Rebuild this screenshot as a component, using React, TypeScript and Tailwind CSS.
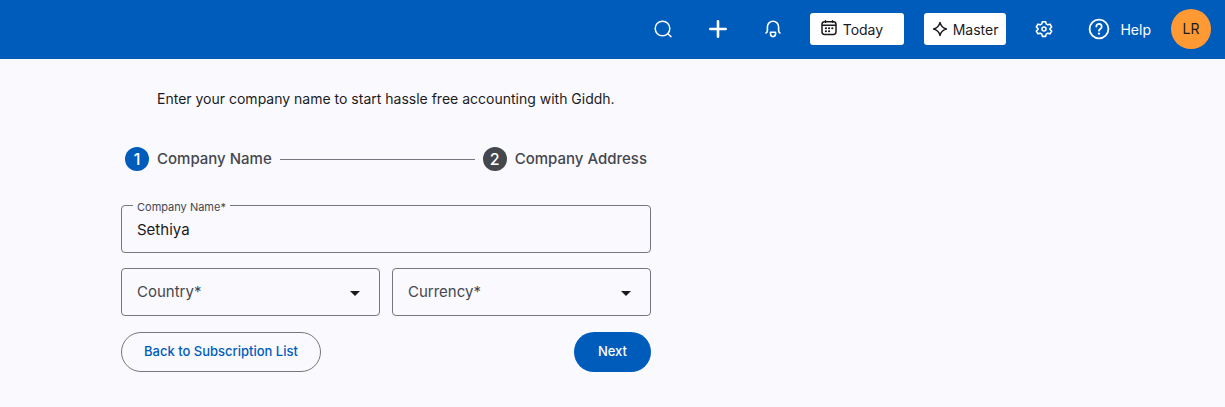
import React, { useState } from 'react';

const SearchIcon = () => (
    <svg width="20" height="20" viewBox="0 0 20 20" fill="none" stroke="currentColor" strokeWidth="1.5" strokeLinecap="round">
        <circle cx="9.5" cy="9.5" r="7.3" />
        <path d="M14.8 14.8L18 17.6" />
    </svg>
);

const PlusIcon = () => (
    <svg width="20" height="20" viewBox="0 0 20 20" fill="none" stroke="currentColor" strokeWidth="2.6" strokeLinecap="round">
        <path d="M10 2.3v15.4M2.3 10h15.4" />
    </svg>
);

const BellIcon = () => (
    <svg width="20" height="20" viewBox="0 0 20 20" fill="none" stroke="currentColor" strokeWidth="1.6" strokeLinecap="round" strokeLinejoin="round">
        <path d="M3 13.9c1-.4 1.4-1.1 1.4-2.1V7.8a5.6 5.6 0 0 1 11.2 0v4c0 1 .4 1.7 1.4 2.1" />
        <path d="M7.5 13.3h5v1.8a2.5 2.5 0 0 1-5 0z" />
    </svg>
);

const CalendarIcon = () => (
    <svg width="16" height="16" viewBox="0 0 16 16" fill="none" stroke="currentColor" strokeWidth="1.5" strokeLinecap="round" className="mb-0.5">
        <rect x="1" y="1.8" width="14" height="12.6" rx="2.6" />
        <path d="M1.5 5.2h13M4.5 .8v1.5M11.5 .8v1.5" />
        <path d="M4.8 8.3h.2M8 8.3h.2M11.2 8.3h.2M4.8 11.3h.2M8 11.3h.2" strokeWidth="2" />
    </svg>
);

const SparkIcon = () => (
    <svg width="16" height="16" viewBox="0 0 16 16" fill="none" stroke="currentColor" strokeWidth="1.4" strokeLinejoin="round">
        <path d="M8 1.5C8.9 5.2 10.8 7.1 14.5 8 10.8 8.9 8.9 10.8 8 14.5 7.1 10.8 5.2 8.9 1.5 8 5.2 7.1 7.1 5.2 8 1.5z" />
    </svg>
);

const GearIcon = () => (
    <svg width="20" height="20" viewBox="0 0 24 24" fill="none" stroke="currentColor" strokeWidth="1.9" strokeLinejoin="round">
        <path d="M10 3.2h4l.6 2.7 2 1.1 2.6-.8 2 3.4-2 1.9v1l2 1.9-2 3.4-2.6-.8-2 1.1-.6 2.7h-4l-.6-2.7-2-1.1-2.6.8-2-3.4 2-1.9v-1l-2-1.9 2-3.4 2.6.8 2-1.1z" />
        <circle cx="12" cy="12" r="2.4" />
    </svg>
);

const HelpIcon = () => (
    <svg width="22" height="22" viewBox="0 0 22 22" fill="none" stroke="currentColor" strokeWidth="1.8" strokeLinecap="round" strokeLinejoin="round">
        <circle cx="11" cy="11" r="9.4" />
        <path d="M8.3 8.6a2.7 2.7 0 1 1 4.2 2.2c-.9.6-1.5 1-1.5 1.9" />
        <path d="M11 15.6v.1" strokeWidth="2.2" />
    </svg>
);

const Header: React.FC = () => (
    <header className="flex h-[59px] items-center justify-end bg-[#005cbb] pr-3.5 pb-px text-sm text-white">
        <div className="mr-[27px] flex items-center gap-[35px]">
            <button aria-label="Search"><SearchIcon /></button>
            <button aria-label="Create"><PlusIcon /></button>
            <button aria-label="Notifications"><BellIcon /></button>
        </div>
        <button className="mr-5 flex h-8 w-[94px] items-center gap-1.5 rounded-[3px] bg-white pl-[11px] text-[#1a1b1f]">
            <CalendarIcon />
            <span className="pt-px">Today</span>
        </button>
        <button className="mr-7 flex h-8 items-center gap-[5px] rounded-[3px] bg-white px-2 text-[#1a1b1f]">
            <SparkIcon />
            <span className="pt-px">Master</span>
        </button>
        <button aria-label="Settings" className="mr-[34px]"><GearIcon /></button>
        <button className="mr-5 flex items-center gap-2.5">
            <HelpIcon />
            <span className="pt-px">Help</span>
        </button>
        <button className="size-10 rounded-full bg-[#ff9933] text-[#1a1b1f]">LR</button>
    </header>
);

interface StepProps {
    index: number;
    label: string;
    active?: boolean;
}

const Step: React.FC<StepProps> = ({ index, label, active }) => (
    <li className="flex items-center gap-2" aria-current={active ? 'step' : undefined}>
        <span className={`flex size-6 items-center justify-center rounded-full text-base text-white ${active ? 'bg-[#005cbb]' : 'bg-[#44474e]'}`}>
            {index}
        </span>
        {label}
    </li>
);

interface SelectFieldProps {
    id: string;
    label: string;
    options: string[];
}

const SelectField: React.FC<SelectFieldProps> = ({ id, label, options }) => (
    <div className="flex h-12 items-center rounded border border-[#74777f] pr-[19px]">
        <select id={id} aria-label={label} defaultValue="" className="h-full min-w-0 flex-1 appearance-none bg-transparent pl-[15px] text-[15px] text-[#44474e] outline-none">
            <option value="">{label}</option>
            {options.map((option) => (
                <option key={option} value={option}>{option}</option>
            ))}
        </select>
        <svg width="10" height="5" viewBox="0 0 10 5" className="pointer-events-none mt-0.5 text-[#1a1b1f]">
            <path d="M0 0h10L5 5z" fill="currentColor" />
        </svg>
    </div>
);

export default function App() {
    const [companyName, setCompanyName] = useState('Sethiya');

    return (
        <div className="min-h-screen bg-[#faf9fd] font-['Inter',sans-serif] text-[#1a1b1f]">
            <Header />
            <main className="ml-[121px] max-w-[530px] pt-[29px]">
                <p className="pl-9 text-sm leading-[22px]">
                    Enter your company name to start hassle free accounting with Giddh.
                </p>

                <ol className="mt-[37px] flex items-center gap-2 px-1 text-[15px] font-medium text-[#44474e]">
                    <Step index={1} label="Company Name" active />
                    <li aria-hidden="true" className="h-px flex-1 bg-[#74777f]" />
                    <Step index={2} label="Company Address" />
                </ol>

                <form className="mt-[27px]" onSubmit={(e) => e.preventDefault()}>
                    <fieldset className="rounded border border-[#74777f] px-[11px]">
                        <legend className="px-1 pt-[3px] text-[11px] leading-3 text-[#44474e]">
                            <label htmlFor="companyName">Company Name*</label>
                        </legend>
                        <input
                            id="companyName"
                            value={companyName}
                            onChange={(e) => setCompanyName(e.target.value)}
                            className="mb-[7px] block h-8 w-full bg-transparent px-1 text-[15px] outline-none"
                        />
                    </fieldset>

                    <div className="mt-[15px] grid grid-cols-2 gap-3">
                        <SelectField id="country" label="Country*" options={['India', 'United Kingdom', 'United States']} />
                        <SelectField id="currency" label="Currency*" options={['INR', 'GBP', 'USD']} />
                    </div>

                    <div className="mt-4 flex items-center justify-between text-[13px] font-medium">
                        <button type="button" className="h-10 rounded-full border border-[#74777f] px-[22px] text-[#005cbb]">
                            Back to Subscription List
                        </button>
                        <button type="submit" className="h-10 rounded-full bg-[#005cbb] px-6 text-white">
                            Next
                        </button>
                    </div>
                </form>
            </main>
        </div>
    );
}
